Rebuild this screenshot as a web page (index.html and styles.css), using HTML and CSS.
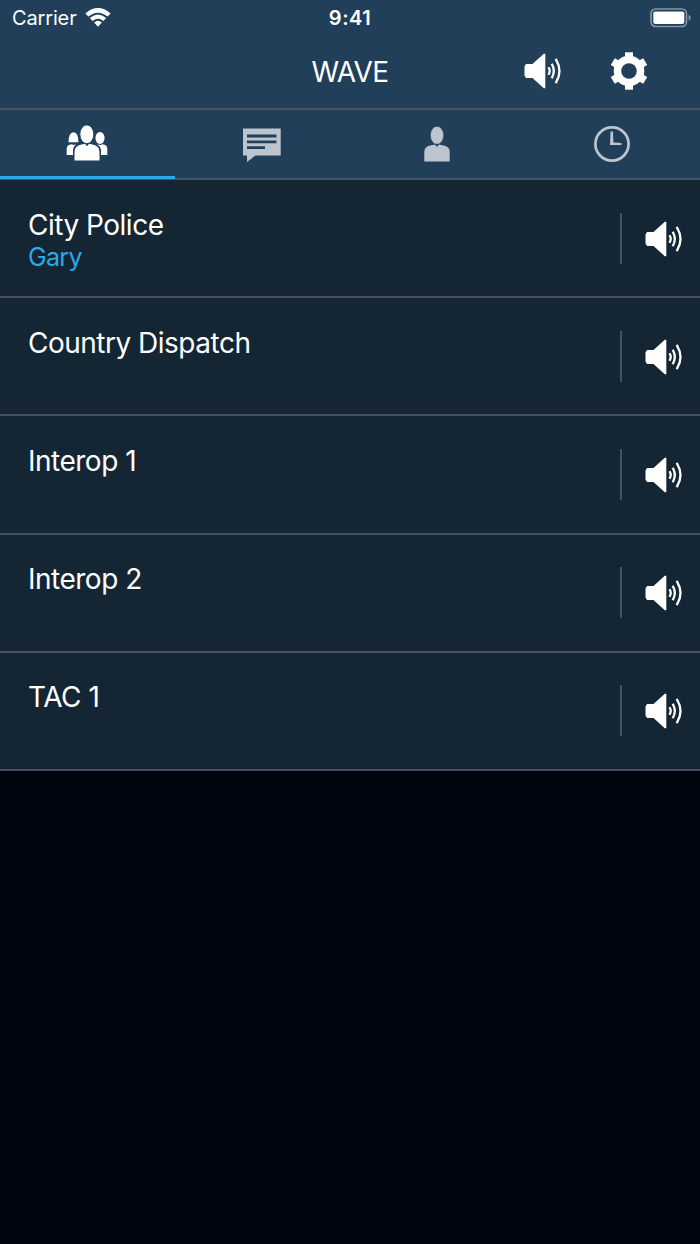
FILE: index.html
```html
<!DOCTYPE html>
<html lang="en">
<head>
    <meta charset="UTF-8">
    <meta name="viewport" content="width=device-width, initial-scale=1.0">
    <title>WAVE</title>
    <link rel="stylesheet" href="styles.css">
</head>
<body>
    <!-- shared icons -->
    <svg class="defs" width="0" height="0">
        <symbol id="speaker" viewBox="0 0 38 36">
            <path d="M2 11h6.500L19.800 .800h1.500V35.200h-1.500L8.500 25H2L.500 22.500v-9z" fill="#fff"/>
            <path d="M25 15.300q1.400 2.700 0 5.400M28.200 11.800q3.200 6.200 0 12.400M32.200 6.900q6.600 11.100 0 22.200" fill="none" stroke="#fff" stroke-width="2.300" stroke-linecap="square"/>
        </symbol>
    </svg>

    <header class="header">
        <div class="status">
            <div class="carrier">
                <span>Carrier</span>
                <svg width="26" height="19" viewBox="0 0 26 19" fill="#fff">
                    <path d="M0.400 5.400Q13-5.200 25.600 5.400L22.600 8.600Q13 .700 3.400 8.600z"/>
                    <path d="M4.800 10Q13 2.800 21.200 10L18.300 13Q13 8.600 7.700 13z"/>
                    <path d="M9.100 14.400Q13 11 16.900 14.400L13 18.700z"/>
                </svg>
            </div>
            <div class="time">9:41</div>
            <svg class="battery" width="42" height="20" viewBox="0 0 42 20">
                <rect x="1" y="1" width="35.500" height="17.500" rx="4.500" fill="none" stroke="#8494a5" stroke-width="1.700"/>
                <rect x="3.300" y="3.500" width="31" height="12.500" rx="2" fill="#fff"/>
                <path d="M38.600 6.800q2.200 1 2.200 3t-2.200 3z" fill="#8494a5"/>
            </svg>
        </div>

        <div class="nav">
            <h1>WAVE</h1>
            <div class="actions">
                <svg width="38" height="36"><use href="#speaker"/></svg>
                <svg width="38" height="38" viewBox="-19 -19 38 38">
                    <g fill="#fff">
                        <path id="tooth" d="M-4-18.700h8V18.700h-8z"/>
                        <use href="#tooth" transform="rotate(60)"/>
                        <use href="#tooth" transform="rotate(120)"/>
                        <circle r="15.300"/>
                    </g>
                    <circle r="7.800" fill="#223f5a"/>
                </svg>
            </div>
        </div>

        <div class="tabs">
            <div class="tab active">
                <svg width="42" height="36" viewBox="0 0 42 36" fill="#fff">
                    <path d="M2.500 17.300Q2.700 7.300 7.500 7.300T12.400 17.300z"/>
                    <ellipse cx="34" cy="13" rx="4.600" ry="6"/>
                    <path d="M.700 30v-6q0-4.500 5-4.800l2 .800 2.300-.800Q7.300 21.500 7 25v5z"/>
                    <path d="M41.300 30v-6q0-4.500-5-4.800l-2 .800-3.300-.800Q34.700 21.500 35 25v5z"/>
                    <path d="M8.500 35.500V27q0-6.300 7-7.500l3.500-.800 2 2.500 2-2.500 3.500.800q7 1.200 7 7.500v8.500z"/>
                    <ellipse cx="20.800" cy="9.300" rx="7" ry="9.400" stroke="#223f5a"/>
                </svg>
            </div>
            <div class="tab">
                <svg width="38" height="36" viewBox="0 0 38 36">
                    <path d="M0 2.500h37.700v27H12.500L4 36v-6.500H0z" fill="#bcc5ce"/>
                    <path d="M4 10h29.500M4 15.900h29.500M4 21.600h18" stroke="#223f5a" stroke-width="2.800"/>
                </svg>
            </div>
            <div class="tab">
                <svg width="26" height="36" viewBox="0 0 26 36" fill="#bcc5ce">
                    <path d="M.300 35.500V26q0-5.300 6-6.500l4.700-1 2 2.500 2-2.500 4.700 1q6 1.200 6 6.500v9.500z"/>
                    <ellipse cx="13" cy="9.300" rx="6.700" ry="9" stroke="#223f5a" stroke-width=".6"/>
                </svg>
            </div>
            <div class="tab">
                <svg width="38" height="38" viewBox="-19 -19 38 38">
                    <circle r="16.600" fill="none" stroke="#bcc5ce" stroke-width="2.700"/>
                    <path d="M-1.500-12.500H1L1.400-1.500 9.500-1V1H-2z" fill="#bcc5ce"/>
                </svg>
            </div>
        </div>
    </header>

    <main class="channels">
        <div class="channel">
            <div class="info">
                <p class="name">City Police</p>
                <p class="talker">Gary</p>
            </div>
            <div class="volume"><svg width="38" height="36"><use href="#speaker"/></svg></div>
        </div>
        <div class="channel">
            <div class="info">
                <p class="name">Country Dispatch</p>
            </div>
            <div class="volume"><svg width="38" height="36"><use href="#speaker"/></svg></div>
        </div>
        <div class="channel">
            <div class="info">
                <p class="name">Interop 1</p>
            </div>
            <div class="volume"><svg width="38" height="36"><use href="#speaker"/></svg></div>
        </div>
        <div class="channel">
            <div class="info">
                <p class="name">Interop 2</p>
            </div>
            <div class="volume"><svg width="38" height="36"><use href="#speaker"/></svg></div>
        </div>
        <div class="channel">
            <div class="info">
                <p class="name">TAC 1</p>
            </div>
            <div class="volume"><svg width="38" height="36"><use href="#speaker"/></svg></div>
        </div>
    </main>
</body>
</html>
```
FILE: styles.css
```css
* {
    margin: 0;
    padding: 0;
    box-sizing: border-box;
}

body {
    font-family: Inter, "Liberation Sans", sans-serif;
    background-color: #00060f;
    color: white;
    min-height: 100vh;
}

svg {
    display: block;
    flex-shrink: 0;
}

.defs {
    position: absolute;
}

.header {
    background-color: #223f5a;
}

.status {
    display: grid;
    grid-template-columns: 1fr auto 1fr;
    align-items: center;
    height: 36px;
    padding: 0 12px;
}

.carrier {
    display: flex;
    align-items: center;
    gap: 8px;
    font-size: 20px;
    letter-spacing: -0.15px;
}

.carrier svg {
    margin-top: -2px;
}

.time {
    font-size: 20px;
    font-weight: 600;
    letter-spacing: 0.5px;
}

.battery {
    justify-self: end;
    margin: -1px -4px 0 0;
}

.nav {
    display: grid;
    grid-template-columns: 1fr auto 1fr;
    align-items: center;
    height: 74px;
    padding: 0 52px;
    border-bottom: 2px solid #465463;
}

.nav h1 {
    grid-column: 2;
    font-size: 28px;
    font-weight: 400;
    line-height: 34px;
    letter-spacing: -0.6px;
}

.actions {
    display: flex;
    align-items: center;
    justify-content: flex-end;
    gap: 48px;
    padding-bottom: 2px;
}

.tabs {
    display: grid;
    grid-template-columns: repeat(4, 1fr);
    height: 70px;
    border-bottom: 2px solid #465463;
}

.tab {
    display: flex;
    justify-content: center;
    align-items: center;
    height: 69px;
    padding: 0 1px 1px 0;
}

.tab.active {
    border-bottom: 3px solid #29abe8;
    padding-bottom: 0;
}

.channel {
    display: flex;
    align-items: center;
    height: 118.2px;
    padding: 0 17px 0 28px;
    background-color: #142634;
    border-bottom: 2px solid #45515e;
}

.info {
    flex: 1;
    align-self: stretch;
    padding-top: 27.5px;
}

.name {
    font-size: 28px;
    line-height: 34px;
    letter-spacing: -0.5px;
}

.talker {
    font-size: 25px;
    line-height: 30px;
    letter-spacing: -0.7px;
    color: #29abe8;
}

.volume {
    display: flex;
    align-items: center;
    height: 51px;
    padding: 1px 0 0 23px;
    border-left: 2px solid #45515e;
}
```
